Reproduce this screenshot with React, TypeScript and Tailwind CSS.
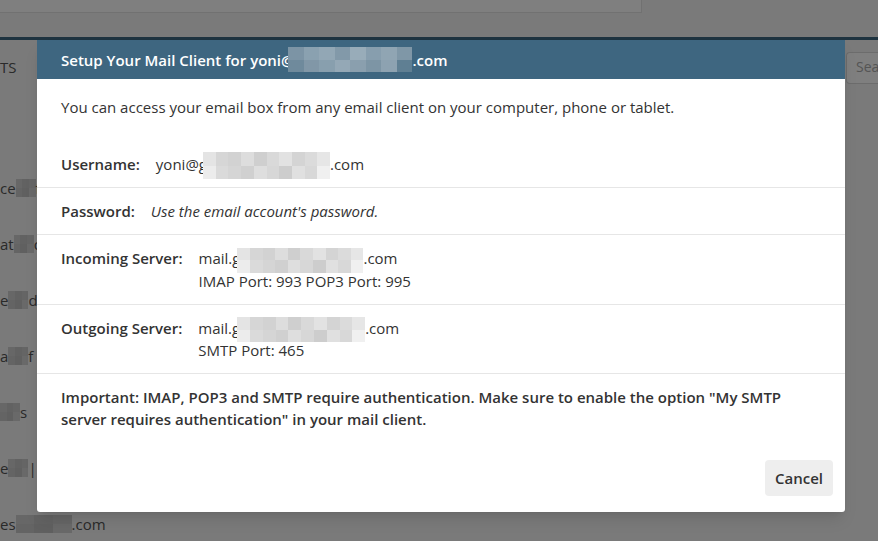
import React from 'react';

// pixelated "redacted" block: two rows of cells
const Mosaic: React.FC<{ top: string[]; bottom: string[]; className?: string }> = ({ top, bottom, className }) => (
    <span className={`inline-flex flex-col align-middle ${className ?? ''}`}>
        <span className="flex flex-1">
            {top.map((c, i) => <span key={i} className={`flex-1 ${c}`} />)}
        </span>
        <span className="flex flex-1">
            {bottom.map((c, i) => <span key={i} className={`flex-1 ${c}`} />)}
        </span>
    </span>
);

const grayTop = ['bg-[#e4e4e4]', 'bg-[#d6d6d6]', 'bg-[#d2d2d2]', 'bg-[#dddddd]', 'bg-[#cfcfcf]', 'bg-[#d9d9d9]', 'bg-[#e2e2e2]', 'bg-[#d4d4d4]', 'bg-[#dbdbdb]', 'bg-[#e6e6e6]'];
const grayBottom = ['bg-[#ececec]', 'bg-[#dadada]', 'bg-[#d5d5d5]', 'bg-[#d0d0d0]', 'bg-[#dedede]', 'bg-[#d7d7d7]', 'bg-[#cdcdcd]', 'bg-[#e0e0e0]', 'bg-[#d8d8d8]', 'bg-[#f0f0f0]'];
const blueTop = ['bg-[#7c94a5]', 'bg-[#8aa1b0]', 'bg-[#92a7b5]', 'bg-[#8299a9]', 'bg-[#98acb9]', 'bg-[#879eae]', 'bg-[#90a5b3]', 'bg-[#7f97a7]'];
const blueBottom = ['bg-[#6f8a9c]', 'bg-[#8197a7]', 'bg-[#889fae]', 'bg-[#94a8b6]', 'bg-[#8a9fae]', 'bg-[#7d95a5]', 'bg-[#8da2b1]', 'bg-[#5f7f93]'];
const bgTop = ['bg-[#cfcfcf]', 'bg-[#c4c4c4]', 'bg-[#cacaca]'];
const bgBottom = ['bg-[#c8c8c8]', 'bg-[#c0c0c0]', 'bg-[#d2d2d2]'];

const Row: React.FC<{ label: string; children: React.ReactNode; last?: boolean }> = ({ label, children, last }) => (
    <div className={`flex gap-4 px-6 py-3 ${last ? '' : 'border-b border-[#e6e6e6]'}`}>
        <span className="font-semibold whitespace-nowrap">{label}</span>
        <div>{children}</div>
    </div>
);

const listRows = [
    { a: '', b: '' },
    { a: 'ce', b: 'fo' },
    { a: 'at', b: 'of' },
    { a: 'e', b: 'd' },
    { a: 'a', b: 'f' },
    { a: '', b: 's' },
    { a: 'e', b: '|' },
];

const App: React.FC = () => {
    return (
        <div className="relative w-full h-[541px] overflow-hidden bg-[#f4f4f4] text-[#555] text-[15px]" style={{ fontFamily: '"Open Sans", "Liberation Sans", sans-serif' }}>
            {/* Page behind the dialog */}
            <div className="flex h-[37px]">
                <div className="w-[642px] h-[13px] bg-white border-b border-r border-[#e2e2e2]" />
                <div className="flex-1" />
            </div>
            <div className="h-[3px] bg-[#3d6680]" />
            <div className="flex">
                <div className="w-[300px]">
                    <div className="h-[64px] pt-4 leading-[22px] text-[#555]">TS</div>
                    {listRows.map((r, i) => (
                        <div key={i} className="h-[56px] flex items-center">
                            <span>{r.a}</span>
                            {(r.a || r.b) && <Mosaic top={bgTop} bottom={bgBottom} className="w-[20px] h-[18px]" />}
                            <span>{r.b}</span>
                        </div>
                    ))}
                    <div className="h-[56px] flex items-center">
                        <span>es</span>
                        <Mosaic top={bgTop} bottom={bgBottom} className="w-[56px] h-[18px]" />
                        <span>.com</span>
                    </div>
                </div>
                <div className="flex-1 flex justify-end pt-3">
                    <div className="w-[32px] h-[32px] ml-auto border-y border-l border-[#d8d8d8] rounded-l bg-white pl-[9px] pt-[4px] text-sm text-[#aaa] overflow-hidden">Sea</div>
                </div>
            </div>

            {/* Dim overlay */}
            <div className="absolute inset-0 bg-black/50" />

            {/* Dialog */}
            <div className="absolute left-[37px] top-[40px] w-[808px] bg-white rounded-b-[3px] shadow-lg text-[#333] leading-[22px]">
                <div className="h-[39px] flex items-center px-6 bg-[#3e6680] text-white font-semibold">
                    <span>Setup Your Mail Client for yoni@</span>
                    <Mosaic top={blueTop} bottom={blueBottom} className="w-[124px] h-[25px] -my-[2px] -ml-[6px]" />
                    <span>.com</span>
                </div>
                <p className="px-6 pt-[17px]">You can access your email box from any email client on your computer, phone or tablet.</p>
                <div className="mt-[23px]">
                    <Row label="Username:">
                        <span>yoni@g</span>
                        <Mosaic top={grayTop} bottom={grayBottom} className="w-[127px] h-[27px] -my-[4px] -ml-[4px]" />
                        <span>.com</span>
                    </Row>
                    <Row label="Password:">
                        <span className="italic">Use the email account's password.</span>
                    </Row>
                    <Row label="Incoming Server:">
                        <div>
                            <span>mail.g</span>
                            <Mosaic top={grayTop} bottom={grayBottom} className="w-[126px] h-[25px] -my-[3px] -ml-[3px]" />
                            <span>.com</span>
                        </div>
                        <div>IMAP Port: 993 POP3 Port: 995</div>
                    </Row>
                    <Row label="Outgoing Server:">
                        <div>
                            <span>mail.g</span>
                            <Mosaic top={grayTop} bottom={grayBottom} className="w-[128px] h-[25px] -my-[3px] -ml-[3px]" />
                            <span>.com</span>
                        </div>
                        <div>SMTP Port: 465</div>
                    </Row>
                    <div className="px-6 py-3 font-semibold">
                        Important: IMAP, POP3 and SMTP require authentication. Make sure to enable the option "My SMTP server requires authentication" in your mail client.
                    </div>
                </div>
                <div className="flex justify-end px-3 pt-[18px] pb-4">
                    <button className="w-[68px] h-[36px] rounded bg-[#eeeeee] font-semibold text-[#333]">Cancel</button>
                </div>
            </div>
        </div>
    );
};

export default App;
